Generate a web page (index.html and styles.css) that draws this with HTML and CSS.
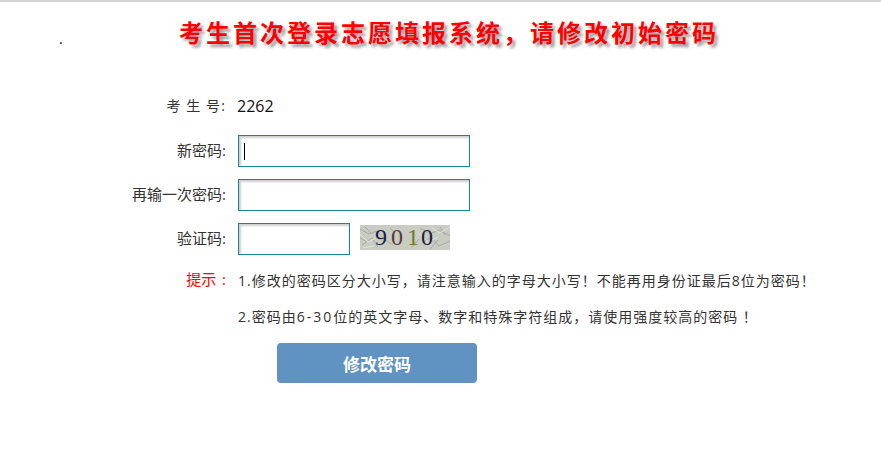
FILE: index.html
```html
<!DOCTYPE html>
<html lang="zh">
<head>
<meta charset="utf-8">
<title>修改初始密码</title>
<link rel="stylesheet" href="styles.css">
</head>
<body>
<div class="top-line"></div>
<header class="head">
  <span class="dot">.</span>
  <h1 class="title">考生首次登录志愿填报系统&#xFF0C;请修改初始密码</h1>
</header>
<form class="form">
  <div class="row row-id">
    <label class="label label-spaced">考 生 号:</label>
    <span class="value">2262</span>
  </div>
  <div class="row">
    <label class="label">新密码:</label>
    <div class="input input-wide"><span class="caret"></span></div>
  </div>
  <div class="row">
    <label class="label">再输一次密码:</label>
    <div class="input input-wide"></div>
  </div>
  <div class="row">
    <label class="label">验证码:</label>
    <div class="input input-short"></div>
    <svg class="captcha" viewBox="0 0 90 25" width="90" height="25" aria-label="9010">
      <rect width="90" height="25" fill="#c9ccc2"/>
      <g fill="none" stroke="#a8aba1" stroke-width="1">
        <path d="M0 4l9 5 8-3 7 8 9 6M2 20l10-7 6 9M4 1l7 7M60 3l10 6 9-4 11 6M62 18l9-6 8 9 11-5M70 24l8-9M30 3l5 5M52 22l7-8M0 13l6 3M80 2l5 8"/>
      </g>
      <g fill="none" stroke="#e2e4dc" stroke-width="1">
        <path d="M0 9l8 8 8-4M58 8l10 9 10-5M72 3l8 5 10-6M3 23l11-2"/>
      </g>
      <text class="cap-d cap-1" x="15" y="20">9</text>
      <text class="cap-d cap-2" x="31" y="20">0</text>
      <text class="cap-d cap-3" x="47" y="20">1</text>
      <text class="cap-d cap-4" x="61" y="20">0</text>
    </svg>
  </div>
  <div class="row row-tip">
    <label class="label label-tip">提示 :</label>
    <p class="tip">1.修改的密码区分大小写&#xFF0C;请注意输入的字母大小写&#xFF01;不能再用身份证最后8位为密码&#xFF01;</p>
  </div>
  <div class="row row-tip2">
    <p class="tip">2.密码由<span class="tip-num">6-30</span>位的英文字母、数字和特殊字符组成&#xFF0C;请使用强度较高的密码 &#xFF01;</p>
  </div>
  <button class="submit" type="button">修改密码</button>
</form>
</body>
</html>
```

FILE: styles.css
```css
html, body {
  margin: 0;
  padding: 0;
  background: #fff;
}
body {
  width: 881px;
  height: 461px;
  overflow: hidden;
  font-family: "Open Sans", "Noto Sans CJK SC", sans-serif;
  font-size: 14px;
  color: #333;
}
.top-line {
  height: 2px;
  background: #d4d4d4;
}
.head {
  display: flex;
  height: 63px;
  padding-left: 59px;
}
.dot {
  width: 120px;
  margin-top: 27px;
  font-size: 14px;
  line-height: 20px;
  color: #000;
}
.title {
  margin: 14px 0 0;
  font-size: 24px;
  line-height: 32px;
  font-weight: 700;
  letter-spacing: 3px;
  color: #f00;
  white-space: nowrap;
  font-family: "Noto Sans CJK SC", sans-serif;
  text-shadow: 3px 3px 3px #999;
}
.form {
  display: flex;
  flex-direction: column;
}
.row {
  display: flex;
  align-items: center;
  height: 32px;
  margin-bottom: 12px;
}
.row-id {
  height: 26px;
  margin-top: 28px;
  margin-bottom: 16px;
}
.label {
  width: 226px;
  flex: none;
  text-align: right;
  box-sizing: border-box;
  font-size: 15px;
  line-height: 20px;
  margin-top: -3px;
}
.label-spaced {
  margin-top: 0;
  font-size: 14px;
  letter-spacing: 1.1px;
}
.value {
  margin-left: 11px;
  font-size: 16px;
  color: #111;
}
.input {
  box-sizing: border-box;
  height: 32px;
  margin-left: 12px;
  border: 1px solid #14859f;
  box-shadow: inset 2px 2px 2px #cfcfcf;
  background: #fff;
  display: flex;
  align-items: center;
}
.input-wide {
  width: 232px;
}
.input-short {
  width: 112px;
}
.caret {
  width: 1px;
  height: 17px;
  margin-left: 5px;
  background: #000;
}
.captcha {
  margin-left: 10px;
  margin-top: -4px;
  flex: none;
  overflow: visible;
}
.cap-d {
  font-family: "Liberation Serif", serif;
  font-size: 24px;
}
.cap-1 { fill: #1c1f4d; }
.cap-2 { fill: #5a3a3a; }
.cap-3 { fill: #6f7a2a; }
.cap-4 { fill: #1d2040; }
.row-tip {
  height: 28px;
  margin-bottom: 8px;
  margin-top: -1px;
}
.row-tip2 {
  height: 28px;
  margin-bottom: 13px;
  padding-left: 238px;
}
.label-tip {
  color: #f00;
  font-size: 15px;
  word-spacing: 2px;
}
.tip {
  margin: 0 0 0 12px;
  letter-spacing: 1px;
  white-space: nowrap;
}
.row-tip2 .tip {
  margin-left: 0;
}
.tip-num {
  letter-spacing: 2px;
}
.submit {
  width: 200px;
  height: 40px;
  margin-left: 277px;
  border: 0;
  border-radius: 4px;
  background: #6093c1;
  color: #fff;
  font-family: "Noto Sans CJK SC", sans-serif;
  font-size: 17px;
  font-weight: 700;
  letter-spacing: 0;
}
```
